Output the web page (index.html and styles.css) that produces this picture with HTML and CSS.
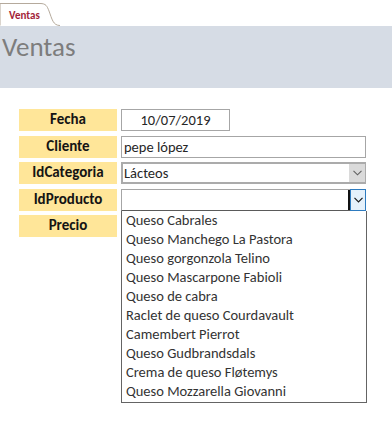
FILE: index.html
```html
<!DOCTYPE html>
<html lang="es">
<head>
<meta charset="utf-8">
<title>Ventas</title>
<link rel="stylesheet" href="styles.css">
</head>
<body>
<div class="tabbar">
  <div class="tab">
    <svg class="tab-shape" width="60" height="26" viewBox="0 0 60 26">
      <path d="M0 25.5 L0 3.5 L40 3.5 C46 3.5 47 6 49 11 C52 19 53 25.5 60 25.5" fill="#fff" stroke="#b5aa9c" stroke-width="1"/>
    </svg>
    <span class="tab-label">Ventas</span>
  </div>
</div>
<header class="header">
  <h1 class="title">Ventas</h1>
</header>
<main class="form">
  <div class="row">
    <div class="label">Fecha</div>
    <div class="field field-date">10/07/2019</div>
  </div>
  <div class="row">
    <div class="label">Cliente</div>
    <div class="field field-wide">pepe lópez</div>
  </div>
  <div class="row">
    <div class="label">IdCategoria</div>
    <div class="field field-wide combo">
      <span class="combo-text">Lácteos</span>
      <span class="combo-btn">
        <svg width="9" height="6" viewBox="0 0 9 6"><path d="M0.5 0.8 L4.5 4.8 L8.5 0.8" fill="none" stroke="#606060" stroke-width="1.1"/></svg>
      </span>
    </div>
  </div>
  <div class="row">
    <div class="label">IdProducto</div>
    <div class="field field-wide combo combo-open">
      <span class="combo-text"></span>
      <span class="caret"></span>
      <span class="combo-btn combo-btn-active">
        <svg width="9" height="6" viewBox="0 0 9 6"><path d="M0.5 0.8 L4.5 4.8 L8.5 0.8" fill="none" stroke="#1a1a1a" stroke-width="1.2"/></svg>
      </span>
      <ul class="dropdown">
        <li>Queso Cabrales</li>
        <li>Queso Manchego La Pastora</li>
        <li>Queso gorgonzola Telino</li>
        <li>Queso Mascarpone Fabioli</li>
        <li>Queso de cabra</li>
        <li>Raclet de queso Courdavault</li>
        <li>Camembert Pierrot</li>
        <li>Queso Gudbrandsdals</li>
        <li>Crema de queso Fløtemys</li>
        <li>Queso Mozzarella Giovanni</li>
      </ul>
    </div>
  </div>
  <div class="row">
    <div class="label">Precio</div>
  </div>
</main>
</body>
</html>
```

FILE: styles.css
```css
html, body {
  margin: 0;
  padding: 0;
  background: #ffffff;
}
body {
  font-family: Carlito, Lato, "Open Sans", sans-serif;
  width: 392px;
  height: 425px;
  overflow: hidden;
}
.tabbar {
  height: 26px;
  position: relative;
  background: #ffffff;
}
.tab {
  position: relative;
  width: 60px;
  height: 26px;
}
.tab-shape {
  position: absolute;
  left: 0;
  top: 0;
}
.tab-label {
  position: absolute;
  left: 9px;
  top: 9px;
  font-size: 11px;
  font-weight: bold;
  color: #a31f3a;
  line-height: 13px;
}
.header {
  height: 62px;
  background: #d6dce5;
}
.title {
  margin: 0;
  padding: 5px 0 0 2px;
  font-size: 27px;
  font-weight: normal;
  color: #7d7d7d;
  line-height: 32px;
}
.form {
  padding: 21px 0 0 19px;
  display: flex;
  flex-direction: column;
  gap: 4.5px;
}
.row {
  display: flex;
  align-items: stretch;
  gap: 4px;
  height: 22px;
}
.label {
  width: 98px;
  background: #ffe699;
  font-size: 15px;
  font-weight: bold;
  color: #141414;
  display: flex;
  align-items: center;
  justify-content: center;
  line-height: 18px;
  padding-bottom: 2px;
  box-sizing: border-box;
}
.field {
  box-sizing: border-box;
  border: 1px solid #a6a6a6;
  font-size: 14.5px;
  color: #262626;
  line-height: 18px;
  display: flex;
  align-items: center;
  background: #fff;
}
.field-date {
  width: 109px;
  justify-content: center;
}
.field-wide {
  width: 245px;
  padding-left: 2px;
}
.combo {
  position: relative;
  border: 2px solid #ababab;
  border-right-width: 1px;
  padding-left: 1px;
}
.combo-text {
  flex: 1;
}
.combo-btn {
  width: 16px;
  align-self: stretch;
  background: #dadada;
  display: flex;
  align-items: center;
  justify-content: center;
}
.combo-open {
  border: 1px solid #a6a6a6;
  border-bottom: 1px solid #5a5a5a;
}
.caret {
  width: 2px;
  height: 20px;
  background: #111;
  align-self: center;
}
.combo-btn-active {
  background: #e5f1fb;
  border: 1px solid #2e7bbf;
  width: 16px;
  box-sizing: border-box;
  margin: -1px -1px -1px 0;
}
.dropdown {
  position: absolute;
  left: -1px;
  top: 21px;
  width: 246px;
  box-sizing: border-box;
  margin: 0;
  padding: 0 0 1px 0;
  list-style: none;
  background: #fff;
  border: 1px solid #646464;
  border-top: none;
}
.dropdown li {
  height: 19px;
  line-height: 19px;
  padding-left: 4px;
  font-size: 14.5px;
  color: #333333;
  white-space: nowrap;
}
```
